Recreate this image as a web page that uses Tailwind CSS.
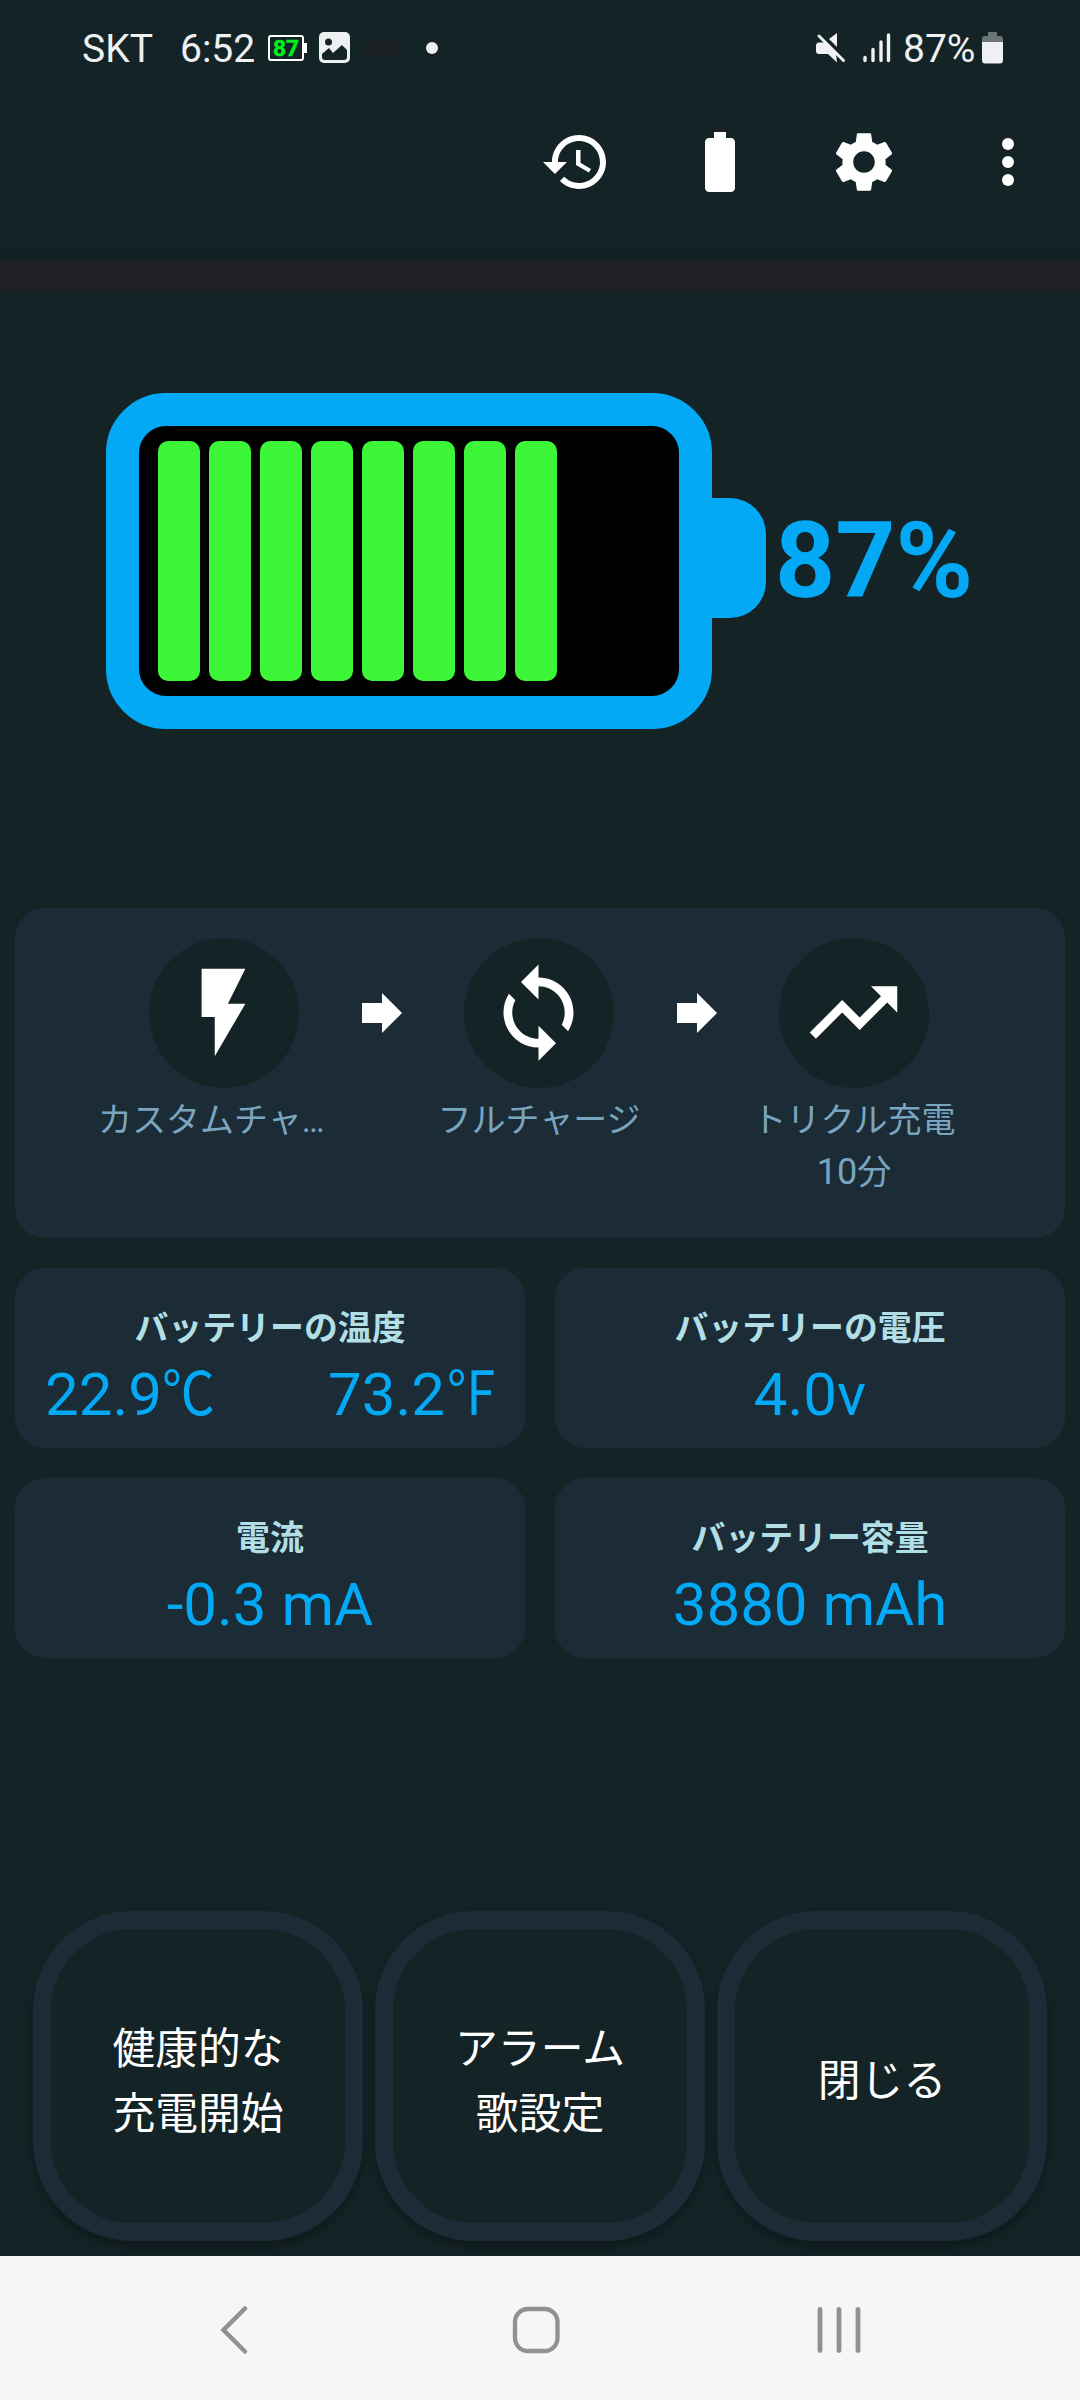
<!DOCTYPE html>
<html lang="ja">
<head>
<meta charset="utf-8">
<title>Battery</title>
<script src="https://cdn.jsdelivr.net/npm/@tailwindcss/browser@4"></script>
</head>
<body class="w-[1080px] h-[2400px] overflow-hidden bg-[#142326] font-['Roboto','Noto_Sans_CJK_JP',sans-serif] flex flex-col">

  <!-- Status bar -->
  <header class="h-[90px] shrink-0 flex items-center pl-[82px] pr-[76px] pt-[5px] text-[39px] leading-none text-[#eef0f1]">
    <span class="w-[98px] pt-[3px]">SKT</span>
    <span class="w-[88px] pt-[3px]">6:52</span>
    <svg class="w-[40px] h-[26px]" viewBox="0 0 40 26">
      <rect x="1" y="1" width="34" height="24" rx="2" fill="none" stroke="#fff" stroke-width="2"/>
      <path d="M36 8h3v10h-3z" fill="#fff"/>
      <text x="18" y="21" text-anchor="middle" font-family="Roboto" font-weight="700" font-size="22.500" textLength="26" lengthAdjust="spacingAndGlyphs" fill="#00f01c" stroke="#00f01c" stroke-width="0.500">87</text>
    </svg>
    <svg class="w-[31px] h-[31px] ml-[11px]" viewBox="0 0 31 31">
      <rect width="31" height="31" rx="5" fill="#eef0f1"/>
      <circle cx="9.500" cy="10" r="3.500" fill="#142326"/>
      <path d="M3 22l7-6 4 5 9-8 5 5v7q0 3-3 3H6q-3 0-3-3z" fill="#142326"/>
    </svg>
    <svg class="w-[38px] h-[18px] ml-[13px]" viewBox="0 0 38 18" fill="none" stroke="#221e20" stroke-width="2">
      <ellipse cx="7" cy="9" rx="5" ry="7" transform="rotate(20 7 9)"/>
      <ellipse cx="19" cy="9" rx="5" ry="7" transform="rotate(20 19 9)"/>
      <ellipse cx="31" cy="9" rx="5" ry="7" transform="rotate(20 31 9)"/>
      <path d="M5 10l4-2M17 11q-1-5 4-5M29 6l2 3 3-4M31 9l-1 4"/>
    </svg>
    <span class="w-[12px] h-[12px] rounded-full bg-[#eef0f1] ml-[25px]"></span>

    <div class="ml-auto flex items-center">
      <svg class="w-[30px] h-[30px] mr-[17px]" viewBox="0 0 30 30">
        <path d="M13 6l8-6v14z" fill="#eef0f1"/>
        <path d="M3 9.500h6L20 20.500l1 9-9-8.500H3q-3 0-3-3v-5q0-3.500 3-3.500z" fill="#eef0f1"/>
        <path d="M4.500 1.500l24 24" stroke="#142326" stroke-width="3"/>
        <path d="M3 3l24.500 24.500" stroke="#eef0f1" stroke-width="3" stroke-linecap="round"/>
      </svg>
      <svg class="w-[28px] h-[30px] mr-[12px]" viewBox="0 0 28 30" stroke="#eef0f1" stroke-width="3.400" stroke-linecap="round">
        <path d="M2 24.500v3M10 16.500v11M18 9v18.500M25.500 2v25.500"/>
      </svg>
      <span class="w-[79px] pt-[3px]">87%</span>
      <svg class="w-[22px] h-[32px]" viewBox="0 0 22 32">
        <path d="M6 0h9v4h3q3 0 3 3v4H0V7q0-3 3-3h3z" fill="#6c7577"/>
        <path d="M0 10h21v18q0 3.500-3 3.500H3q-3 0-3-3.500z" fill="#eef0f1"/>
      </svg>
    </div>
  </header>

  <!-- Toolbar -->
  <nav class="h-[156px] shrink-0 flex justify-end items-start gap-[72px] pt-[36px] pr-[36px]">
    <svg class="size-[72px]" viewBox="0 0 24 24" fill="#fff"><path d="M13 3c-4.970 0-9 4.030-9 9H1l3.890 3.890.070.140L9 12H6c0-3.870 3.130-7 7-7s7 3.130 7 7-3.130 7-7 7c-1.930 0-3.680-.790-4.940-2.060l-1.420 1.420C8.270 19.990 10.510 21 13 21c4.970 0 9-4.030 9-9s-4.030-9-9-9zm-1 5v5l4.280 2.540.720-1.210-3.500-2.080V8H12z"/></svg>
    <svg class="size-[72px]" viewBox="0 0 24 24" fill="#fff"><path d="M15.670 4H14V2h-4v2H8.330C7.600 4 7 4.600 7 5.330v15.330C7 21.400 7.600 22 8.330 22h7.330c.740 0 1.340-.600 1.340-1.330V5.330C17 4.600 16.400 4 15.670 4z"/></svg>
    <svg class="size-[72px]" viewBox="0 0 24 24" fill="#fff"><path d="M19.140 12.940c.040-.300.060-.610.060-.940 0-.320-.020-.640-.070-.940l2.030-1.580c.180-.140.230-.410.120-.610l-1.920-3.320c-.120-.220-.370-.290-.590-.220l-2.390.960c-.500-.380-1.030-.700-1.620-.940l-.360-2.540c-.040-.240-.240-.410-.480-.410h-3.840c-.240 0-.430.170-.470.410l-.360 2.540c-.590.240-1.130.570-1.620.940l-2.390-.960c-.220-.080-.470 0-.590.220L2.740 8.870c-.120.210-.080.470.120.610l2.030 1.580c-.050.300-.090.630-.090.940s.020.640.070.940l-2.030 1.580c-.180.140-.230.410-.120.610l1.920 3.320c.120.220.370.290.590.220l2.390-.960c.500.380 1.030.700 1.620.940l.360 2.540c.050.240.240.410.480.410h3.840c.240 0 .440-.170.470-.410l.360-2.540c.590-.240 1.130-.560 1.620-.940l2.390.960c.220.080.470 0 .590-.220l1.920-3.320c.120-.220.070-.470-.120-.610l-2.010-1.580zM12 15.600c-1.980 0-3.600-1.620-3.600-3.600s1.620-3.600 3.600-3.600 3.600 1.620 3.600 3.600-1.620 3.600-3.600 3.600z"/></svg>
    <svg class="size-[72px]" viewBox="0 0 24 24" fill="#fff"><circle cx="12" cy="6" r="2"/><circle cx="12" cy="12" r="2"/><circle cx="12" cy="18" r="2"/></svg>
  </nav>
  <div class="h-[15px] shrink-0 bg-gradient-to-b from-[#122024] to-[#142326]"></div>
  <div class="h-[30px] shrink-0 bg-[#202124]"></div>

  <main class="grow flex flex-col">
    <!-- Battery gauge -->
    <section class="h-[617px] shrink-0 pt-[102px] pl-[106px] flex items-start">
      <div class="w-[606px] h-[336px] rounded-[60px] border-[33px] border-[#04a9f6] bg-black pl-[19px] flex items-center gap-[9px]">
        <i class="w-[42px] h-[240px] rounded-[10px] bg-[#3ef638]"></i>
        <i class="w-[42px] h-[240px] rounded-[10px] bg-[#3ef638]"></i>
        <i class="w-[42px] h-[240px] rounded-[10px] bg-[#3ef638]"></i>
        <i class="w-[42px] h-[240px] rounded-[10px] bg-[#3ef638]"></i>
        <i class="w-[42px] h-[240px] rounded-[10px] bg-[#3ef638]"></i>
        <i class="w-[42px] h-[240px] rounded-[10px] bg-[#3ef638]"></i>
        <i class="w-[42px] h-[240px] rounded-[10px] bg-[#3ef638]"></i>
        <i class="w-[42px] h-[240px] rounded-[10px] bg-[#3ef638]"></i>
      </div>
      <div class="w-[54px] h-[120px] mt-[105px] rounded-r-[36px] bg-[#04a9f6]"></div>
      <div class="ml-[9px] mt-[109px] h-[120px] leading-[120px] text-[105px] font-bold text-[#04a9f6]">87%</div>
    </section>

    <!-- Charging steps -->
    <section class="mx-[15px] h-[330px] shrink-0 rounded-[30px] bg-[#1b2c36] pt-[30px] pl-[84px] flex items-start text-[34px] leading-[52px] text-[#7aa5c0]">
      <div class="w-[250px] flex flex-col items-center">
        <div class="size-[150px] rounded-full bg-[#142326] flex items-center justify-center pr-[2px] pb-[2px]">
          <svg class="size-[105px]" viewBox="0 0 24 24" fill="#fff"><path d="M7 2v11h3v9l7-12h-4l4-8z"/></svg>
        </div>
        <div class="self-start whitespace-nowrap mt-[6px] -ml-px">カスタムチャ…</div>
      </div>
      <svg class="w-[40px] h-[40px] mx-[12.5px] mt-[55px]" viewBox="0 0 40 40" fill="#fff"><path d="M0 10h20V0l20 20-20 20V30H0z"/></svg>
      <div class="w-[250px] flex flex-col items-center">
        <div class="size-[150px] rounded-full bg-[#142326] flex items-center justify-center pr-[2px] pb-[2px]">
          <svg class="size-[105px]" viewBox="0 0 24 24" fill="#fff"><path d="M12 4V1L8 5l4 4V6c3.310 0 6 2.690 6 6 0 1.010-.250 1.970-.700 2.800l1.460 1.460C19.540 15.030 20 13.570 20 12c0-4.420-3.580-8-8-8zm0 14c-3.310 0-6-2.690-6-6 0-1.010.250-1.970.700-2.800L5.240 7.740C4.460 8.970 4 10.430 4 12c0 4.420 3.580 8 8 8v3l4-4-4-4v3z"/></svg>
        </div>
        <div class="whitespace-nowrap mt-[6px]">フルチャージ</div>
      </div>
      <svg class="w-[40px] h-[40px] mx-[12.5px] mt-[55px]" viewBox="0 0 40 40" fill="#fff"><path d="M0 10h20V0l20 20-20 20V30H0z"/></svg>
      <div class="w-[250px] flex flex-col items-center">
        <div class="size-[150px] rounded-full bg-[#142326] flex items-center justify-center pr-[2px] pb-[2px]">
          <svg class="size-[105px]" viewBox="0 0 24 24" fill="#fff"><path d="M16 6l2.290 2.290-4.880 4.880-4-4L2 16.590 3.410 18l6-6 4 4 6.300-6.290L22 12V6z"/></svg>
        </div>
        <div class="whitespace-nowrap mt-[6px]">トリクル充電</div>
        <div class="whitespace-nowrap"><span class="text-[36px]">10</span>分</div>
      </div>
    </section>

    <!-- Readings -->
    <section class="mx-[15px] mt-[30px] grid grid-cols-2 gap-[30px] text-center">
      <div class="h-[180px] rounded-[30px] bg-[#1b2c36] pt-[36px]">
        <h2 class="text-[33.9px] leading-[50px] font-bold text-[#b2dfe5]">バッテリーの温度</h2>
        <div class="mt-[6px] flex justify-between pl-[30px] pr-[28px] text-[60px] leading-[70px] text-[#04a9f6]"><span>22.9<span class="inline-block origin-left scale-x-[0.88] -mr-[7px]">℃</span></span><span>73.2<span class="inline-block origin-left scale-x-[0.87] -mr-[8px]">℉</span></span></div>
      </div>
      <div class="h-[180px] rounded-[30px] bg-[#1b2c36] pt-[36px]">
        <h2 class="text-[33.9px] leading-[50px] font-bold text-[#b2dfe5]">バッテリーの電圧</h2>
        <div class="mt-[6px] text-[60px] leading-[70px] text-[#04a9f6]">4.0v</div>
      </div>
      <div class="h-[180px] rounded-[30px] bg-[#1b2c36] pt-[36px]">
        <h2 class="text-[33.9px] leading-[50px] font-bold text-[#b2dfe5]">電流</h2>
        <div class="mt-[6px] text-[60px] leading-[70px] text-[#04a9f6]">-0.3 mA</div>
      </div>
      <div class="h-[180px] rounded-[30px] bg-[#1b2c36] pt-[36px]">
        <h2 class="text-[33.9px] leading-[50px] font-bold text-[#b2dfe5]">バッテリー容量</h2>
        <div class="mt-[6px] text-[60px] leading-[70px] text-[#04a9f6]">3880 mAh</div>
      </div>
    </section>

    <!-- Actions -->
    <section class="mt-[253px] px-[33px] flex gap-[12px] text-[42.8px] leading-[65px] text-white">
      <button class="size-[330px] rounded-[99px] border-[18px] border-[#1b2c36] pt-[11px] shadow-[0_6px_10px_rgba(0,0,0,0.28)]">健康的な<br>充電開始</button>
      <button class="size-[330px] rounded-[99px] border-[18px] border-[#1b2c36] pt-[11px] shadow-[0_6px_10px_rgba(0,0,0,0.28)]">アラーム<br>歌設定</button>
      <button class="size-[330px] rounded-[99px] border-[18px] border-[#1b2c36] pt-[11px] shadow-[0_6px_10px_rgba(0,0,0,0.28)]">閉じる</button>
    </section>
  </main>

  <!-- Navigation bar -->
  <footer class="h-[144px] shrink-0 relative z-10 bg-[#f6f6f6] flex items-center pt-[4px] pl-[219px]">
    <svg class="w-[30px] h-[50px]" viewBox="0 0 30 50" fill="none" stroke="#919191" stroke-width="4.500" stroke-linecap="round"><path d="M26 3.500L4.500 25 26 46.500"/></svg>
    <svg class="w-[48px] h-[48px] ml-[263px]" viewBox="0 0 48 48" fill="none" stroke="#919191" stroke-width="4.300"><rect x="3" y="3" width="42.500" height="42" rx="13"/></svg>
    <svg class="w-[44px] h-[46px] ml-[257px]" viewBox="0 0 44 46" stroke="#919191" stroke-width="4.800" stroke-linecap="round"><path d="M3 2.500v41M22 2.500v41M41 2.500v41"/></svg>
  </footer>
</body>
</html>
